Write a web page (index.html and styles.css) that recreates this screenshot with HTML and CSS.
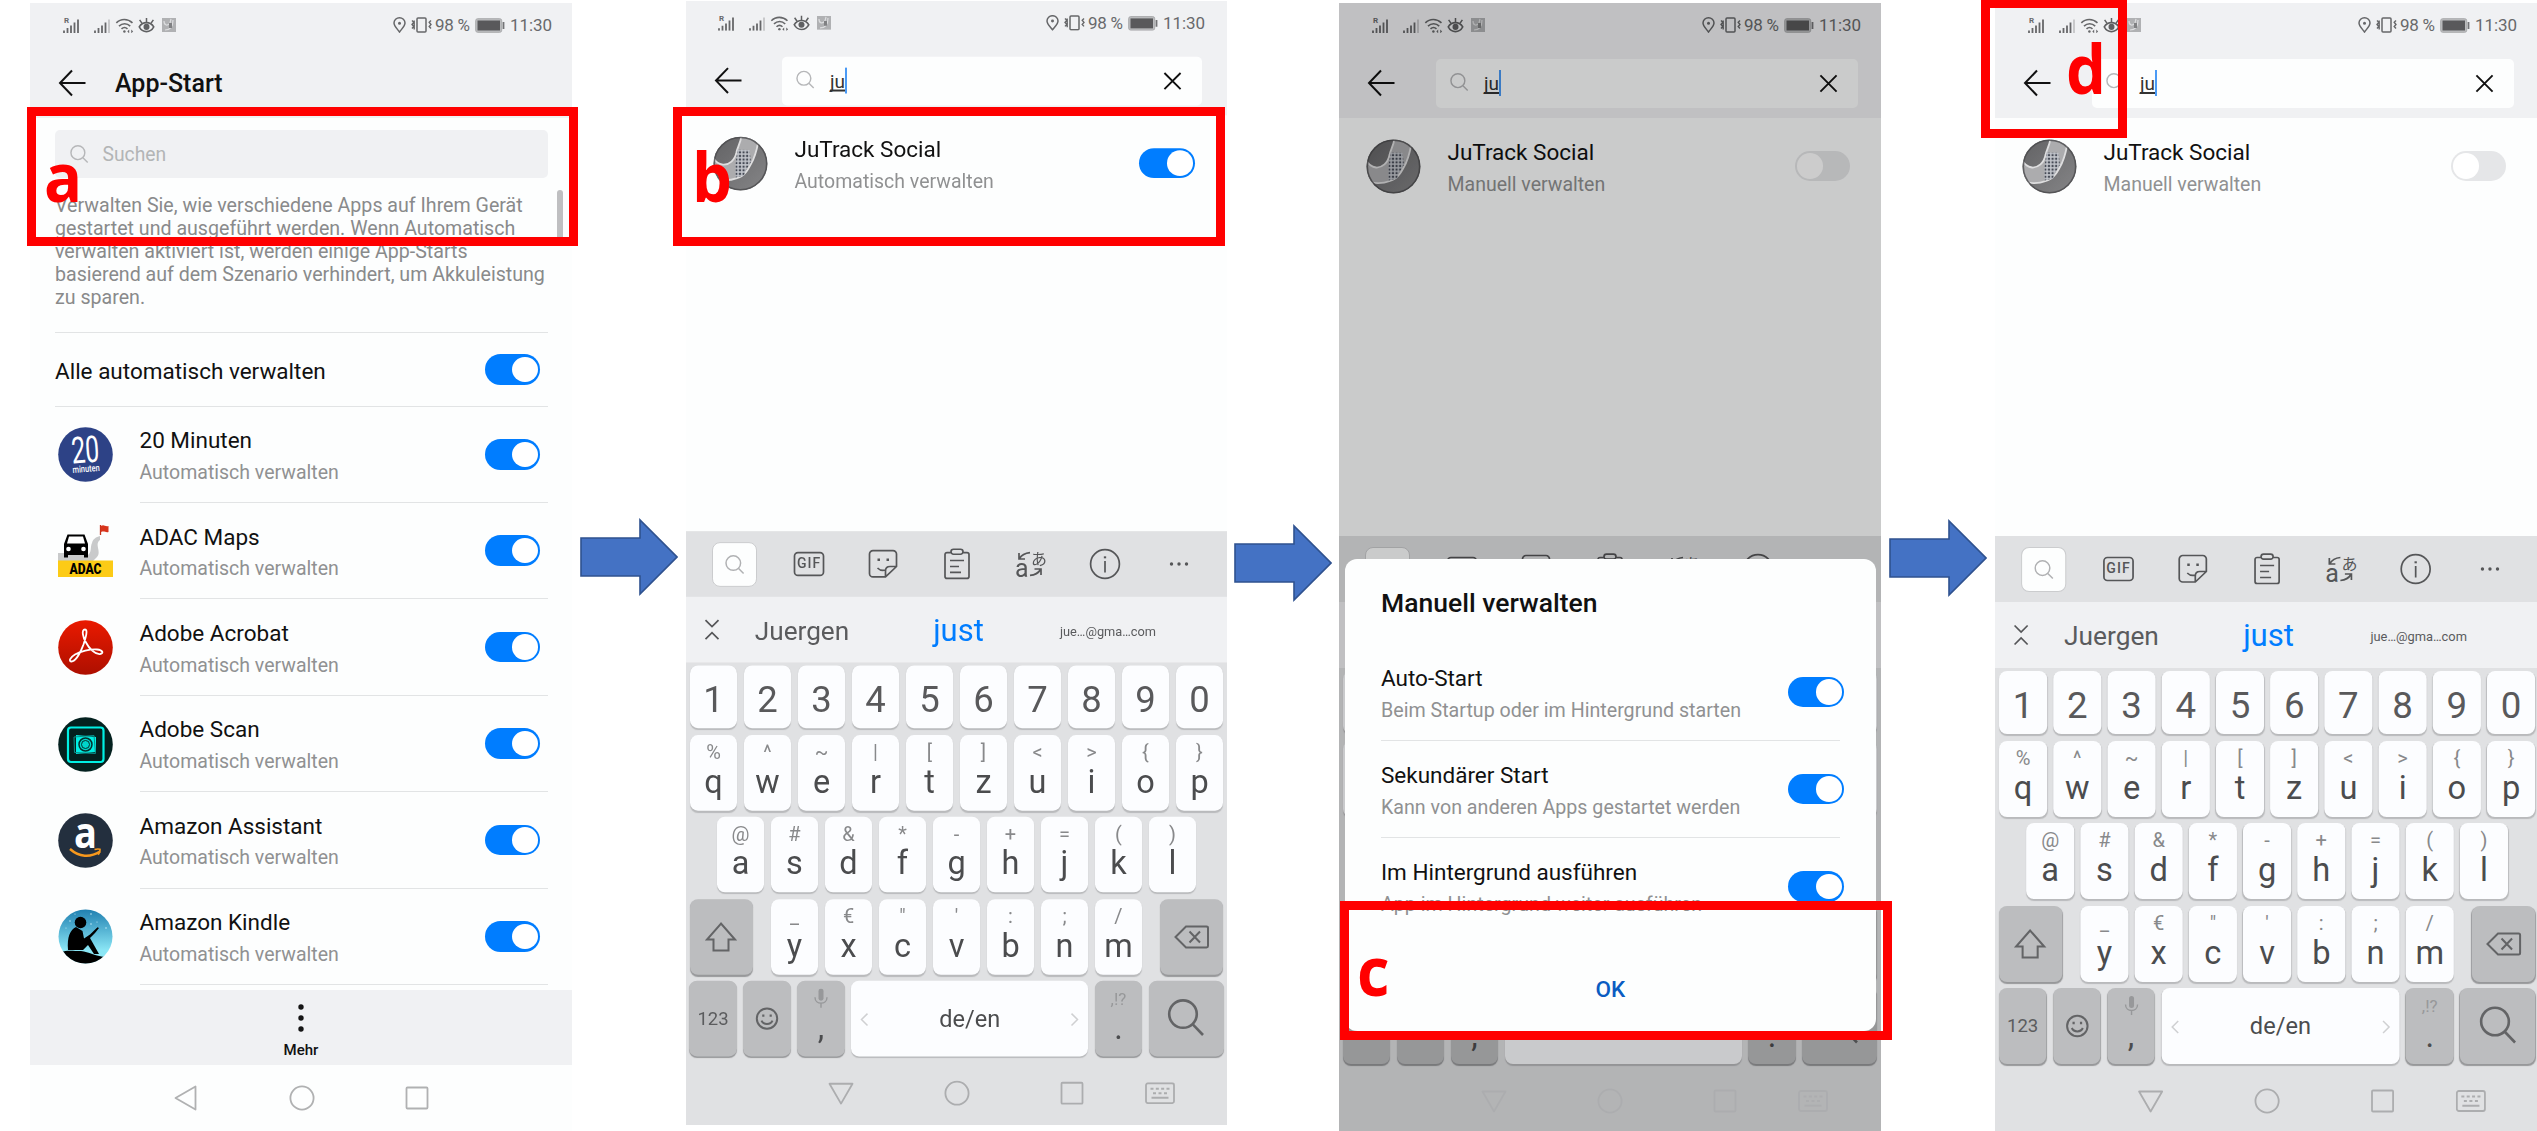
FILE: index.html
```html
<!DOCTYPE html>
<html lang="de">
<head>
<meta charset="utf-8">
<title>App-Start</title>
<link rel="stylesheet" href="styles.css">
</head>
<body>
<svg class="sprite" aria-hidden="true">
  <defs>
    <linearGradient id="acro" x1="0" y1="0" x2="0" y2="1"><stop offset="0" stop-color="#ea1a00"/><stop offset="1" stop-color="#ad0f00"/></linearGradient>
    <linearGradient id="sky" x1="0" y1="0" x2="0" y2="1"><stop offset="0" stop-color="#1f7fb0"/><stop offset=".75" stop-color="#8ae6f5"/></linearGradient>
    <linearGradient id="metal" x1="0" y1="0" x2="1" y2="1"><stop offset="0" stop-color="#626264"/><stop offset="1" stop-color="#858587"/></linearGradient>
    <clipPath id="round"><circle cx="27.5" cy="27.5" r="27"/></clipPath>
    <pattern id="mesh" width="3.600" height="3.600" patternUnits="userSpaceOnUse"><rect width="3.600" height="3.600" fill="#c3c6cc"/><rect x=".7" y=".7" width="2.100" height="2.100" fill="#454a55"/></pattern>
  </defs>
  <symbol id="i-back" viewBox="0 0 28 28"><path d="M14 1.5 2 14l12 12.5M2 14h25.5" fill="none" stroke="#111" stroke-width="2"/></symbol>
  <symbol id="i-search" viewBox="0 0 20 20"><circle cx="8.3" cy="8.6" r="7.3" fill="none" stroke="currentColor" stroke-width="1.5"/><path d="m13.6 14 5 5" stroke="currentColor" stroke-width="1.5"/></symbol>
  <symbol id="i-close" viewBox="0 0 20 20"><path d="m1.5 1.5 17 17m0-17-17 17" stroke="#111" stroke-width="2"/></symbol>
  <symbol id="i-bars" viewBox="0 0 16 15"><path d="M1 15v-2.500M4.500 15v-5M8 15V7.500M11.500 15V4.500" stroke="#666769" stroke-width="1.800"/></symbol>
  <symbol id="i-wifi" viewBox="0 0 19 16"><path d="M.8 5.2C5.5.4 13 .4 18 5.2M3.6 8.6c3.6-3.4 8.6-3.4 12 0M6.3 11.6c2-1.8 4.4-1.8 6.4 0" fill="none" stroke="#666769" stroke-width="1.7"/><circle cx="9.4" cy="14.3" r="1.3" fill="#666769"/><path d="m12.5 14.3 2-2v4zM18.7 14.3l-2-2v4z" fill="#666769"/></symbol>
  <symbol id="i-eye" viewBox="0 0 17 17"><path d="M.8 10.5c3.5-6 11.800-6 15.400 0-3.600 6.700-11.900 6.700-15.400 0z" fill="none" stroke="#5f6062" stroke-width="1.700"/><circle cx="8.500" cy="10.500" r="3.200" fill="#5f6062"/><path d="M8.500 5.500V1M3.800 6.800 1.200 3M13.200 6.800 15.800 3" stroke="#5f6062" stroke-width="1.600"/></symbol>
  <symbol id="i-tile" viewBox="0 0 14 14"><rect width="14" height="14" fill="#b0b1b3"/><path d="M2 3c0 5 4 5 6 2l1-4M3 12c5 0 8-3 8-10" fill="none" stroke="#dcdddf" stroke-width="1.200"/><path d="M7 5h3v5H7z" fill="#808183"/></symbol>
  <symbol id="i-pin" viewBox="0 0 13 16"><path d="M6.500 15C3.500 11 1 8.800 1 6a5.500 5.200 0 0 1 11 0c0 2.800-2.500 5-5.500 9z" fill="none" stroke="#666769" stroke-width="1.500"/><circle cx="6.500" cy="6.200" r="1.500" fill="#666769"/></symbol>
  <symbol id="i-vibe" viewBox="0 0 21 16"><rect x="6" y="1" width="9" height="14" rx="1" fill="none" stroke="#666769" stroke-width="1.500"/><path d="m1 3.500 1.800 1.800L1 7.500l1.800 2L1 11.500m2.200-8 0 9M20 3.500l-1.800 1.800L20 7.500l-1.800 2 1.800 2" fill="none" stroke="#666769" stroke-width="1.400"/></symbol>
  <symbol id="i-batt" viewBox="0 0 30 15"><rect x=".7" y=".7" width="26" height="13.600" rx="2" fill="#bbbcbe" stroke="#a9aaac"/><rect x="2.500" y="2.500" width="22.500" height="10" fill="#59595b"/><path d="M28.500 4v7" stroke="#737476" stroke-width="1.800"/></symbol>
  <symbol id="i-tri-left" viewBox="0 0 26 26"><path d="M22.500 1.500v23L2.500 13z" fill="none" stroke="currentColor" stroke-width="1.800" stroke-linejoin="round"/></symbol>
  <symbol id="i-tri-down" viewBox="0 0 26 26"><path d="M1.500 3.500h23L13 23.500z" fill="none" stroke="currentColor" stroke-width="1.800" stroke-linejoin="round"/></symbol>
  <symbol id="i-home" viewBox="0 0 26 26"><circle cx="13" cy="13" r="11.600" fill="none" stroke="currentColor" stroke-width="1.800"/></symbol>
  <symbol id="i-recent" viewBox="0 0 26 26"><rect x="2.500" y="2.500" width="21" height="21" rx="1" fill="none" stroke="currentColor" stroke-width="1.800"/></symbol>
  <symbol id="i-kbd" viewBox="0 0 30 22"><rect x="1" y="1" width="28" height="20" rx="2" fill="none" stroke="currentColor" stroke-width="1.800"/><path d="M5.500 6.500h19" stroke="currentColor" stroke-width="2" stroke-dasharray="3 2.330"/><path d="M8 11h14" stroke="currentColor" stroke-width="2" stroke-dasharray="3 2.500"/><path d="M6.500 15.700h17" stroke="currentColor" stroke-width="2"/></symbol>
  <symbol id="i-jutrack" viewBox="0 0 55 55">
    <g clip-path="url(#round)">
      <rect width="55" height="55" fill="url(#metal)"/>
      <path d="M28.500-1C28 6 24 12 23.500 16 22 24 16 29 10 28.500 5 28 2 25 0 21v20c6 4 16 4 24 1 8-2 12-10 16-18 3-7 5-14 6-25z" fill="#acacae"/>
      <path d="M28.500-1C28 6 24 12 23.500 16 22 24 16 29 10 28.500 5 28 2 25 0 21M46-1c-1 11-3 18-6 25-4 8-8 16-16 18-8 3-18 3-24-1" fill="none" stroke="#dededf" stroke-width="1.800"/>
      <path d="m24.500 13.500 12 .3 1.500 12-5 8-2 6-8.500 1.700v-14z" fill="url(#mesh)"/>
      <circle cx="27.500" cy="27.500" r="26.300" fill="none" stroke="#4b4b4d" stroke-width="1.800" opacity=".8"/>
    </g>
  </symbol>
  <symbol id="i-zwanzig" viewBox="0 0 55 55"><circle cx="27.500" cy="27.500" r="27.300" fill="#2d4286"/><g transform="rotate(-4 27 27)" fill="#fff" font-family="Roboto,sans-serif"><text x="27.500" y="35.500" font-size="37" font-weight="400" text-anchor="middle" textLength="28" lengthAdjust="spacingAndGlyphs">20</text><text x="27" y="45" font-size="9.500" font-weight="500" text-anchor="middle" textLength="27" lengthAdjust="spacingAndGlyphs">minuten</text></g></symbol>
  <symbol id="i-adac" viewBox="0 0 55 55"><path d="M0 29h10l20 2c4-3 2-8 4-12 1-4 4-6 8-7v4c-6 4 2 12-3 17l-4 4H0z" fill="#c9cacb"/><path d="M42.500 1v10" stroke="#c8321b" stroke-width="1.300"/><path d="M43 2c3-2 4 1 7.500 0v6c-3 1-4-1.500-7.500 0z" fill="#d8341c"/><path d="M9.500 10.500h17L30 20v13.500h-4V31H10v2.500H6V20z"/><path d="M11 12.500h14l2 7H9z" fill="#fff"/><circle cx="10.500" cy="25" r="2.300" fill="#fff"/><circle cx="25.500" cy="25" r="2.300" fill="#fff"/><rect y="36.500" width="55" height="16.500" fill="#fccb16"/><text x="27.500" y="50" text-anchor="middle" font-family="Roboto,sans-serif" font-weight="900" font-size="15" textLength="32" lengthAdjust="spacingAndGlyphs">ADAC</text></symbol>
  <symbol id="i-acrobat" viewBox="0 0 55 55"><circle cx="27.500" cy="27.500" r="27.300" fill="url(#acro)"/><path d="M27 9.500c-4 0-2 8 1 13 3 6 9 12 14 11.500 4-.5 3-4-3-4.500-7-.5-17 2-22 5-6 3.500-6 7-3.500 7 4 0 9-9 12-17C28 17 30 9.500 27 9.500z" fill="none" stroke="#fff" stroke-width="1.800"/></symbol>
  <symbol id="i-scan" viewBox="0 0 55 55"><circle cx="27.500" cy="27.500" r="27.300" fill="#04211f"/><rect x="10" y="10.500" width="35.500" height="34.500" rx="3" fill="none" stroke="#00f0e4" stroke-width="2.200"/><path d="m18 18 20 2v15l-20 2z" fill="#00f0e4"/><path d="m16 20 20-1.500 1.500 18-21-1z" fill="none" stroke="#0a8e88" stroke-width="1"/><circle cx="27.500" cy="27.500" r="6.500" fill="#00d5cb" stroke="#04302d" stroke-width="1.500"/><circle cx="27.500" cy="27.500" r="4" fill="none" stroke="#04302d"/></symbol>
  <symbol id="i-amazon" viewBox="0 0 55 55"><circle cx="27.500" cy="27.500" r="27.300" fill="#232f3e"/><text x="27.500" y="35" text-anchor="middle" font-family="'Open Sans',sans-serif" font-weight="700" font-size="43" textLength="23" lengthAdjust="spacingAndGlyphs" fill="#fff">a</text><path d="M12 36c9 8 20 9 30 2.500" fill="none" stroke="#f7981d" stroke-width="2.400"/><path d="M36.500 36.500c2.500-.7 4-.7 5.500-.2.300 1.600-.4 3.500-1.800 5.500" fill="none" stroke="#f7981d" stroke-width="1.700"/></symbol>
  <symbol id="i-kindle" viewBox="0 0 55 55"><g clip-path="url(#round)"><rect width="55" height="55" fill="url(#sky)"/><g fill="#bfe8f5"><circle cx="12" cy="12" r=".8"/><circle cx="33" cy="5" r=".8"/><circle cx="33" cy="15" r=".8"/><circle cx="48" cy="19" r=".8"/><circle cx="39" cy="13" r=".6"/><circle cx="17" cy="5" r=".6"/><circle cx="8" cy="19" r=".6"/></g><path d="M3 43c6-2 12-1 20-1 8 1 14 5 24 6v8H0z"/><circle cx="22.500" cy="13.500" r="5.800"/><path d="M18 18c-6 3-9 10-8 23h15l5-5 6 9h5l-9-16 5-5 4-5-1.500-.8L32 25.500l-6 4-1.500-7.500z"/></g></symbol>
  <symbol id="i-arrow" viewBox="0 0 98 78"><path d="M1 20h59V2l37 37-37 37V58H1z" fill="#4472c4" stroke="#2f528f" stroke-width="1.600"/></symbol>
</svg>

<template id="tpl-status">
  <div class="status">
    <span class="bars"><svg><use href="#i-bars"/><path class="full" d="M15 15V1.500"/></svg><span class="roam">R</span></span>
    <span class="bars"><svg><use href="#i-bars"/><path class="faint" d="M15 15V1.500"/></svg></span>
    <svg class="s-wifi"><use href="#i-wifi"/></svg>
    <svg class="s-eye"><use href="#i-eye"/></svg>
    <svg class="s-tile"><use href="#i-tile"/></svg>
    <span class="push"></span>
    <svg class="s-pin"><use href="#i-pin"/></svg>
    <svg class="s-vibe"><use href="#i-vibe"/></svg>
    <span class="pct">98 %</span>
    <svg class="s-batt"><use href="#i-batt"/></svg>
    <span class="clock">11:30</span>
  </div>
</template>

<template id="tpl-search">
  <div class="searchbar">
    <svg class="back"><use href="#i-back"/></svg>
    <div class="field">
      <svg class="mag"><use href="#i-search"/></svg>
      <span class="typed">ju</span><i class="caret"></i>
      <svg class="clear"><use href="#i-close"/></svg>
    </div>
  </div>
</template>

<template id="tpl-keyboard">
  <div class="keyboard">
    <div class="tools">
      <div><span class="toolbox"><svg width="20" height="21"><use href="#i-search"/></svg></span></div>
      <div><svg width="32" height="26"><rect x="1.500" y="1.500" width="29" height="23" rx="3.500"/><text x="16" y="17.500" class="gif">GIF</text></svg></div>
      <div><svg width="30" height="30"><path d="M15 28H5a3.500 3.500 0 0 1-3.500-3.500V5A3.500 3.500 0 0 1 5 1.500h20A3.500 3.500 0 0 1 28.500 5v12.500L17.500 28H15zM17.500 28v-6c0-3 1.500-4.500 4.500-4.500h6.500M9.500 19c2 2 5 3 8 2"/><path d="M9.500 10.700h2.500M18.500 10.700h2.500" stroke-width="2.600"/></svg></div>
      <div><svg width="26" height="32"><path d="M7 4.500H3a2 2 0 0 0-2 2V28.500a2 2 0 0 0 2 2H23a2 2 0 0 0 2-2V6.500a2 2 0 0 0-2-2h-4M9.500 1.200h7a2.500 2.500 0 0 1 0 5h-7a2.500 2.500 0 0 1 0-5zM6 12.500h14M6 18.500h9M6 24.500h11"/></svg></div>
      <div><svg width="32" height="32"><text x="0" y="29.500" class="tr-a">a</text><text x="16" y="16.500" class="tr-j">あ</text><path d="M15 4.500C9.500 5 6.500 7 4.500 10.500M4 5v6h6M15 27.500c5.500-.5 8.500-2.500 10.500-6M19.500 21h6.500v6"/></svg></div>
      <div><svg width="32" height="32"><circle cx="16" cy="16" r="14.400"/><path d="M16 13v11.500"/><path d="M16 8.300v2" stroke-width="2.300"/></svg></div>
      <div><svg width="22" height="6"><g class="dots"><circle cx="3.500" cy="3" r="1.700"/><circle cx="11" cy="3" r="1.700"/><circle cx="18.500" cy="3" r="1.700"/></g></svg></div>
    </div>
    <div class="suggest">
      <svg class="collapse" width="16" height="22"><path d="m1.500 1.500 6.500 6.500 6.500-6.500M1.500 20.500 8 14l6.500 6.500"/></svg>
      <span class="word">Juergen</span><span class="word best">just</span><span class="word mail">jue…@gma…com</span>
    </div>
    <div class="keys">
      <div class="keyrow nums"><b>1</b><b>2</b><b>3</b><b>4</b><b>5</b><b>6</b><b>7</b><b>8</b><b>9</b><b>0</b></div>
      <div class="keyrow"><b><i>%</i>q</b><b><i>^</i>w</b><b><i>~</i>e</b><b><i>|</i>r</b><b><i>[</i>t</b><b><i>]</i>z</b><b><i>&lt;</i>u</b><b><i>&gt;</i>i</b><b><i>{</i>o</b><b><i>}</i>p</b></div>
      <div class="keyrow"><b><i>@</i>a</b><b><i>#</i>s</b><b><i>&amp;</i>d</b><b><i>*</i>f</b><b><i>-</i>g</b><b><i>+</i>h</b><b><i>=</i>j</b><b><i>(</i>k</b><b><i>)</i>l</b></div>
      <div class="keyrow spread">
        <b class="mod wide"><svg width="32" height="32"><path d="M16 2.500 2 18.500h6.500V29.500h15V18.500H30z"/></svg></b>
        <span class="mid"><b><i>_</i>y</b><b><i>€</i>x</b><b><i>"</i>c</b><b><i>'</i>v</b><b><i>:</i>b</b><b><i>;</i>n</b><b><i>/</i>m</b></span>
        <b class="mod wide"><svg width="36" height="24"><path d="M12 1.500h20.500a1.500 1.500 0 0 1 1.500 1.500v18a1.500 1.500 0 0 1-1.500 1.500H12L1.500 12zM15.500 6.500l10.500 11m0-11-10.500 11"/></svg></b>
      </div>
      <div class="keyrow">
        <b class="mod small">123</b>
        <b class="mod"><svg width="24" height="24"><circle cx="12" cy="12" r="10.200"/><path d="M6.500 14c2 4.500 9 4.500 11 0"/><path d="M7.200 9h2.200M14.600 9h2.200" stroke-width="2.400"/></svg></b>
        <b class="mod text"><i><svg class="mic" width="14" height="20"><rect x="4.500" y="0" width="5" height="12" rx="2.500"/><path d="M1 8.500c0 8 12 8 12 0M7 14.500V19"/></svg></i>,</b>
        <b class="space"><svg width="9" height="14"><path d="M7.500 1 1.500 7l6 6"/></svg><span>de/en</span><svg width="9" height="14"><path d="m1.500 1 6 6-6 6"/></svg></b>
        <b class="mod text"><i class="punct">,!?</i>.</b>
        <b class="mod enter"><svg width="38" height="38"><circle cx="16" cy="15.500" r="13.800"/><path d="M25.500 25.500 36 36.500"/></svg></b>
      </div>
    </div>
    <div class="nav kb-nav"><svg><use href="#i-tri-down"/></svg><svg><use href="#i-home"/></svg><svg><use href="#i-recent"/></svg><svg class="kbd"><use href="#i-kbd"/></svg></div>
  </div>
</template>

<main class="board">
  <section class="phone">
    <header class="top">
      <div data-tpl="tpl-status"></div>
      <div class="titlebar"><svg class="back"><use href="#i-back"/></svg><h1>App-Start</h1></div>
    </header>
    <div class="content">
      <div class="find"><svg class="mag"><use href="#i-search"/></svg><span>Suchen</span></div>
      <p class="intro">Verwalten Sie, wie verschiedene Apps auf Ihrem Gerät<br>gestartet und ausgeführt werden. Wenn Automatisch<br>verwalten aktiviert ist, werden einige App-Starts<br>basierend auf dem Szenario verhindert, um Akkuleistung<br>zu sparen.</p>
      <div class="all"><span class="name">Alle automatisch verwalten</span><i class="toggle on"></i></div>
      <div class="app"><svg><use href="#i-zwanzig"/></svg><div class="line"><div class="txt"><span class="name">20 Minuten</span><span class="sub">Automatisch verwalten</span></div><i class="toggle on"></i></div></div>
      <div class="app"><svg><use href="#i-adac"/></svg><div class="line"><div class="txt"><span class="name">ADAC Maps</span><span class="sub">Automatisch verwalten</span></div><i class="toggle on"></i></div></div>
      <div class="app"><svg><use href="#i-acrobat"/></svg><div class="line"><div class="txt"><span class="name">Adobe Acrobat</span><span class="sub">Automatisch verwalten</span></div><i class="toggle on"></i></div></div>
      <div class="app"><svg><use href="#i-scan"/></svg><div class="line"><div class="txt"><span class="name">Adobe Scan</span><span class="sub">Automatisch verwalten</span></div><i class="toggle on"></i></div></div>
      <div class="app"><svg><use href="#i-amazon"/></svg><div class="line"><div class="txt"><span class="name">Amazon Assistant</span><span class="sub">Automatisch verwalten</span></div><i class="toggle on"></i></div></div>
      <div class="app"><svg><use href="#i-kindle"/></svg><div class="line"><div class="txt"><span class="name">Amazon Kindle</span><span class="sub">Automatisch verwalten</span></div><i class="toggle on"></i></div></div>
      <i class="scroll"></i>
    </div>
    <div class="more"><svg width="6" height="28"><circle cx="3" cy="3" r="2.700"/><circle cx="3" cy="14" r="2.700"/><circle cx="3" cy="25" r="2.700"/></svg><span>Mehr</span></div>
    <div class="nav"><svg><use href="#i-tri-left"/></svg><svg><use href="#i-home"/></svg><svg><use href="#i-recent"/></svg></div>
  </section>

  <svg class="arrow a1"><use href="#i-arrow"/></svg>

  <section class="phone short">
    <header class="top"><div data-tpl="tpl-status"></div><div data-tpl="tpl-search"></div></header>
    <div class="results"><div class="app"><svg><use href="#i-jutrack"/></svg><div class="line"><div class="txt"><span class="name">JuTrack Social</span><span class="sub">Automatisch verwalten</span></div><i class="toggle on"></i></div></div></div>
    <div data-tpl="tpl-keyboard"></div>
  </section>

  <svg class="arrow a2"><use href="#i-arrow"/></svg>

  <section class="phone dimmed">
    <header class="top"><div data-tpl="tpl-status"></div><div data-tpl="tpl-search"></div></header>
    <div class="results"><div class="app"><svg><use href="#i-jutrack"/></svg><div class="line"><div class="txt"><span class="name">JuTrack Social</span><span class="sub">Manuell verwalten</span></div><i class="toggle"></i></div></div></div>
    <div data-tpl="tpl-keyboard"></div>
    <div class="scrim"></div>
    <div class="dialog">
      <h2>Manuell verwalten</h2>
      <div class="opt"><div class="txt"><span class="name">Auto-Start</span><span class="sub">Beim Startup oder im Hintergrund starten</span></div><i class="toggle on"></i></div>
      <div class="opt"><div class="txt"><span class="name">Sekundärer Start</span><span class="sub">Kann von anderen Apps gestartet werden</span></div><i class="toggle on"></i></div>
      <div class="opt"><div class="txt"><span class="name">Im Hintergrund ausführen</span><span class="sub">App im Hintergrund weiter ausführen</span></div><i class="toggle on"></i></div>
      <div class="ok">OK</div>
    </div>
  </section>

  <svg class="arrow a3"><use href="#i-arrow"/></svg>

  <section class="phone last">
    <header class="top"><div data-tpl="tpl-status"></div><div data-tpl="tpl-search"></div></header>
    <div class="results"><div class="app"><svg><use href="#i-jutrack"/></svg><div class="line"><div class="txt"><span class="name">JuTrack Social</span><span class="sub">Manuell verwalten</span></div><i class="toggle"></i></div></div></div>
    <div data-tpl="tpl-keyboard"></div>
  </section>

  <div class="mark mark-a"></div><span class="letter letter-a">a</span>
  <div class="mark mark-b"></div><span class="letter letter-b">b</span>
  <div class="mark mark-c"></div><span class="letter letter-c">c</span>
  <div class="mark mark-d"></div><span class="letter letter-d">d</span>
</main>
<script src="script.js"></script>
</body>
</html>
```

FILE: styles.css
```css
* { box-sizing: border-box; }
body { margin: 0; background: #fff; font-family: Roboto, "Noto Sans CJK JP", sans-serif; color: #111; }
svg { display: block; flex: none; overflow: visible; }
.sprite { position: absolute; width: 0; height: 0; }
h1, h2, p { margin: 0; }
i, b { font-style: normal; font-weight: 400; }

.board {
  position: relative; width: 2537px; height: 1131px; overflow: hidden; padding-left: 30px;
  display: grid; grid-template-columns: 542px 114px 541px 112px 542px 114px 542px; align-items: start;
}
.phone { position: relative; display: flex; flex-direction: column; margin-top: 3px; height: 1130px; background: #fdfefe; }
.short { margin-top: 1px; transform: scaleY(.9947); transform-origin: 0 0; }
.top { background: #f0f1f3; height: 115px; flex: none; }

/* status bar */
.status { display: flex; align-items: center; height: 44px; padding: 0 20px 0 33px; font-size: 17px; color: #68696b; white-space: nowrap; }
.short .status { padding: 0 22px 0 32px; }
.status .push { flex: 1; }
.bars { position: relative; width: 16px; height: 15px; margin-right: 14.500px; }
.bars + .bars { margin-right: 5px; }
.bars svg { width: 16px; height: 15px; }
.bars path { stroke-width: 1.800; }
.full { stroke: #666769; }
.faint { stroke: #c4c5c7; }
.roam { position: absolute; left: 1px; top: -1px; font-size: 8px; font-weight: 700; line-height: 8px; }
.s-wifi { width: 19px; height: 15px; }
.s-eye { width: 17px; height: 16px; margin-left: 4px; }
.s-tile { width: 14px; height: 14px; margin-left: 7px; }
.s-pin { width: 13px; height: 16px; }
.s-vibe { width: 21px; height: 16px; margin-left: 5px; }
.pct { margin-left: 3px; width: 37px; letter-spacing: -.3px; }
.s-batt { width: 30px; height: 15px; margin-left: 3px; }
.clock { margin-left: 5px; width: 42px; letter-spacing: -.1px; }

/* headers */
.back { width: 28px; height: 28px; }
.titlebar, .searchbar { display: flex; align-items: center; height: 71px; padding-left: 28px; }
.titlebar h1 { margin-left: 29px; font-size: 25px; font-weight: 500; padding-top: 3px; line-height: 32px; }
.field { display: flex; align-items: center; width: 422px; height: 49px; margin-left: 41px; margin-top: 1px; padding: 0 20px 0 14px; background: #fdfefe; border-radius: 5px; }
.short .field { width: 420px; margin-left: 40px; }
.mag { width: 19px; height: 20px; color: #b6b7b9; }
.field .mag { margin-top: -3px; }
.typed { margin-left: 15px; font-size: 19px; line-height: 23px; color: #333; text-decoration: underline; text-decoration-thickness: 1.500px; text-underline-offset: 2px; text-decoration-skip-ink: none; }
.caret { width: 2px; height: 26px; background: #4a9af5; }
.clear { width: 19px; height: 19px; margin-left: auto; }

/* app list */
.content { position: relative; flex: none; height: 872px; padding: 12px 24px 0 25px; }
.find { display: flex; align-items: center; gap: 14px; height: 48px; padding-left: 14.500px; background: #f0f1f3; border-radius: 5px; color: #b3b5b6; font-size: 19.300px; }
.find span { padding-top: 1px; }
.intro { margin-top: 15.500px; padding-bottom: 23px; border-bottom: 1px solid #e2e4e5; font-size: 19.620px; line-height: 23.100px; color: #898a8b; white-space: nowrap; }
.all { display: flex; align-items: center; justify-content: space-between; height: 73.700px; padding-right: 8px; border-bottom: 1px solid #e2e4e5; }
.all .name { padding-top: 3px; }
.app { display: flex; align-items: center; height: 96.400px; padding-left: 3px; }
.app > svg { width: 55px; height: 55px; }
.line { flex: 1; display: flex; align-items: center; justify-content: space-between; height: 100%; margin-left: 26.500px; padding-right: 8px; border-bottom: 1px solid #e2e4e5; }
.txt { display: flex; flex-direction: column; gap: 2.600px; padding-top: 4.500px; white-space: nowrap; }
.name { font-size: 22.500px; line-height: 30px; color: #111; }
.sub { font-size: 19.500px; line-height: 30px; color: #909192; }
.toggle { position: relative; flex: none; width: 55.500px; height: 30.500px; border-radius: 15.500px; background: #e5e6e8; }
.toggle::after { content: ""; position: absolute; top: 2.500px; left: 2px; width: 26px; height: 25.500px; border-radius: 50%; background: #fff; }
.toggle.on { background: #007dff; }
.toggle.on::after { left: 27.500px; }
.scroll { position: absolute; right: 9px; top: 72px; width: 6px; height: 50px; border-radius: 3px; background: #bfbfc1; }
.more { height: 75px; flex: none; background: #f0f1f3; display: flex; flex-direction: column; align-items: center; padding-top: 14px; font-size: 15px; font-weight: 500; line-height: 20px; gap: 8px; }
.more svg { fill: #151515; }
.nav { display: flex; align-items: center; gap: 89.500px; padding-left: 143px; height: 65px; color: #b0b1b2; }
.nav svg { width: 26px; height: 26px; }

.results { flex: none; height: 418px; padding: 0 24px; }
.results .line { border: 0; padding-right: 7px; }
.results .txt { gap: 3px; padding-top: 4.500px; }
.short .line { padding-right: 8.500px; }

/* keyboard */
.keyboard { height: 597px; background: #e0e1e3; }
.last .keyboard { transform: scaleX(1.004); transform-origin: 0 0; }
.tools { display: grid; grid-template-columns: repeat(7, 74.100px); height: 66px; padding-left: 11.500px; }
.tools > div { display: flex; align-items: center; justify-content: center; }
.tools svg { fill: none; stroke: #555658; stroke-width: 1.700; }
.tools text { fill: #555658; stroke: none; }
.gif { font-size: 14px; font-weight: 500; text-anchor: middle; letter-spacing: 1px; }
.tr-a { font-size: 25px; }
.tr-j { font-family: "Noto Sans CJK JP", sans-serif; font-size: 16px; }
.dots { fill: #555658; stroke: none; }
.toolbox { display: flex; align-items: center; justify-content: center; width: 45px; height: 45px; background: #fdfefe; border: 1px solid #cbccce; border-radius: 8px; color: #b0b1b3; }
.toolbox svg { stroke: none; }
.suggest { display: grid; grid-template-columns: 37.500px 157px 156px 143px; align-items: center; height: 66px; background: #f0f1f3; white-space: nowrap; }
.collapse { margin-left: 18px; fill: none; stroke: #555658; stroke-width: 1.700; }
.word { text-align: center; font-size: 26.200px; line-height: 34px; color: #5a5b5d; padding-top: 2px; }
.best { font-size: 31px; color: #007dff; padding-top: 2px; }
.mail { font-size: 12.800px; padding-top: 4px; }
.keys { display: flex; flex-direction: column; gap: 6.600px; padding: 3px 3.700px 0; }
.keyrow { display: flex; justify-content: center; gap: 6.500px; height: 76px; }
.mid { display: flex; gap: 6.500px; }
.spread { justify-content: space-between; }
.keyrow b {
  display: flex; flex-direction: column; align-items: center; flex: none; width: 47.500px; padding-top: 5px;
  background: #fcfdff; border-radius: 8px; box-shadow: 0 1.500px 1px #b9babc; font-size: 32.500px; line-height: 37px; color: #4b4c4e;
}
.keyrow i { height: 24px; font-size: 20px; line-height: 24px; color: #88898b; }
.nums { height: 63px; }
.keyrow.nums b { font-size: 36.500px; line-height: 59px; color: #59595b; }
.keyrow b.mod { background: #bcbdbf; box-shadow: 0 1.500px 1px #97989a; justify-content: center; padding-top: 0; }
.keyrow b.mod.text { justify-content: flex-start; padding-top: 6px; }
.keyrow b.mod.text i { color: #97989a; }
.keyrow b.mod.small { font-size: 18.500px; padding-top: 0; color: #5b5c5e; }
.keyrow b.wide { width: 63.500px; }
.keyrow b.enter { width: 75px; }
.mod svg { fill: none; stroke: #636466; stroke-width: 2; }
.enter svg { stroke-width: 2.600; margin-top: -2px; }
.mod svg.mic { stroke: #97989a; stroke-width: 1.400; margin-top: 2px; }
.mic rect { fill: #97989a; stroke: none; }
.keyrow i.punct { font-size: 17px; }
.keyrow b.space { flex-direction: row; justify-content: space-between; width: 237px; padding: 1px 9px 0; font-size: 23.500px; }
.space svg { fill: none; stroke: #cfd0d2; stroke-width: 1.500; }
.kb-nav { height: 74px; padding-left: 142px; color: #acadaf; }
.nav svg.kbd { width: 30px; height: 22px; margin-left: -30px; }

/* dialog */
.scrim { position: absolute; inset: 0; background: rgba(0, 0, 0, .2); }
.dimmed .kb-nav { color: #d8d9db; }
.dialog { position: absolute; left: 6px; top: 556px; width: 530.500px; height: 472px; padding: 27px 36px 0; background: #fdfefe; border-radius: 12px; }
.dialog h2 { font-size: 26.500px; line-height: 34px; font-weight: 500; white-space: nowrap; }
.opt { display: flex; align-items: center; justify-content: space-between; height: 97px; border-bottom: 1px solid #e2e4e5; }
.dialog h2 + .opt { margin-top: 24px; }
.opt:nth-of-type(3) { border: 0; }
.opt .sub { font-size: 19.650px; }
.opt .toggle { margin-right: -4px; }
.ok { text-align: center; font-size: 22.500px; line-height: 30px; font-weight: 500; color: #0a5cc2; margin-top: 39px; }

/* arrows and callouts */
.arrow { width: 98px; height: 78px; justify-self: center; }
.a1 { margin-top: 517.500px; }
.a2 { margin-top: 523.500px; }
.a3 { margin-top: 518.500px; }
.mark { position: absolute; border: 9px solid #f00; }
.mark-a { left: 27px; top: 107px; width: 551px; height: 139px; }
.mark-b { left: 673px; top: 107px; width: 552px; height: 139px; }
.mark-c { left: 1340px; top: 901px; width: 552px; height: 139px; }
.mark-d { left: 1981px; top: -1px; width: 146px; height: 139px; }
.letter { position: absolute; font: 700 68px/68px "Open Sans", sans-serif; color: #f00; transform: scaleX(.93); transform-origin: 0 0; }
.letter-a { left: 44px; top: 142px; }
.letter-b { left: 692px; top: 142px; }
.letter-c { left: 1357px; top: 936px; }
.letter-d { left: 2066px; top: 34px; }
```

FILE: script.js
```js
// Fill every placeholder with the shared status bar, search bar or keyboard.
document.querySelectorAll('[data-tpl]').forEach(function (slot) {
  var tpl = document.getElementById(slot.dataset.tpl);
  slot.replaceWith(tpl.content.cloneNode(true));
});
```
